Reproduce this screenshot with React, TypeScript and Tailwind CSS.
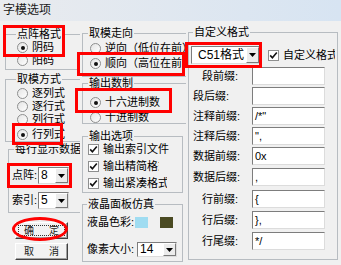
import React from 'react'

function Radio({ label, checked = false, className = '' }: { label: string; checked?: boolean; className?: string }) {
  return (
    <div className={`flex items-center h-[13px] gap-[4px] whitespace-nowrap ${className}`}>
      <span className="w-[11px] h-[11px] shrink-0 rounded-full border border-[#8e8f8f] bg-gradient-to-br from-[#e4e4e4] to-white flex items-center justify-center">
        {checked && <span className="w-[4px] h-[4px] rounded-full bg-[#111]" />}
      </span>
      <span>{label}</span>
    </div>
  )
}

function Check({ label, className = '', textClass = '' }: { label: string; className?: string; textClass?: string }) {
  return (
    <div className={`flex items-center h-[13px] gap-[4px] whitespace-nowrap ${className}`}>
      <span className="w-[11px] h-[11px] shrink-0 border border-[#8e8f8f] bg-white flex items-center justify-center">
        <svg width="9" height="9" viewBox="0 0 9 9">
          <path d="M1.2 4.4 L3.4 6.8 L7.8 1.6" fill="none" stroke="#111" strokeWidth="1.6" />
        </svg>
      </span>
      <span className={`overflow-hidden ${textClass}`}>{label}</span>
    </div>
  )
}

function Group({ title, className, legendClass, children }: { title: string; className: string; legendClass: string; children?: React.ReactNode }) {
  return (
    <fieldset className={`shrink-0 border border-[#b7bcc1] ${className}`}>
      <legend className={`px-[1px] leading-[13px] whitespace-nowrap ${legendClass}`}>{title}</legend>
      {children}
    </fieldset>
  )
}

function DropBtn() {
  return (
    <span className="w-[13px] h-full shrink-0 bg-[#ececec] border border-t-white border-l-white border-r-[#7a7a7a] border-b-[#7a7a7a] flex items-center justify-center">
      <svg width="7" height="4" viewBox="0 0 7 4">
        <path d="M0 0 H7 L3.5 4 Z" fill="#000" />
      </svg>
    </span>
  )
}

function Combo({ value, className }: { value: string; className: string }) {
  return (
    <div className={`flex shrink-0 bg-white border border-t-[#7d7d7d] border-l-[#7d7d7d] border-r-[#dcdcdc] border-b-[#dcdcdc] ${className}`}>
      <span className="flex-1 pl-[2px] flex items-center font-['Liberation_Sans',sans-serif] text-[12px]">{value}</span>
      <DropBtn />
    </div>
  )
}

function Btn({ a, b, focus = false, className }: { a: string; b: string; focus?: boolean; className: string }) {
  return (
    <div className={`shrink-0 bg-[#f2f2f2] border border-t-white border-l-white border-r-[#404040] border-b-[#404040] shadow-[inset_-1px_-1px_0_#a0a0a0] p-[2px] ${className}`}>
      <div className={`h-full flex items-center justify-between px-[5px] text-[10px] text-[#222] ${focus ? 'border border-dotted border-[#333]' : 'border border-transparent'}`}>
        <span>{a}</span>
        <span>{b}</span>
      </div>
    </div>
  )
}

const fields = [
  { label: '段前缀:', value: '', row: 'mt-[3px]', pad: 'pl-[13px]' },
  { label: '段后缀:', value: '', row: 'mt-[2px]', pad: 'pl-[4px]' },
  { label: '注释前缀:', value: '/*"', row: 'mt-[2px]', pad: 'pl-[4px]' },
  { label: '注释后缀:', value: '",', row: 'mt-[2px]', pad: 'pl-[4px]' },
  { label: '数据前缀:', value: '0x', row: 'mt-[2px]', pad: 'pl-[4px]' },
  { label: '数据后缀:', value: ',', row: 'mt-[3px]', pad: 'pl-[4px]' },
  { label: '行前缀:', value: '{', row: 'mt-[4px]', pad: 'pl-[13px]' },
  { label: '行后缀:', value: '},', row: 'mt-[3px]', pad: 'pl-[13px]' },
  { label: '行尾缀:', value: '*/', row: 'mt-[3px]', pad: 'pl-[13px]' },
]

export default function App() {
  return (
    <div className="relative w-[341px] h-[265px] overflow-hidden bg-[#f0f0f0] text-[11px] leading-[13px] text-black font-['Liberation_Sans','Noto_Sans_CJK_SC',sans-serif]">
      {/* title bar */}
      <div className="h-[21px] flex items-center pl-[3px] text-[12px] text-[#1a1a1a] bg-gradient-to-r from-[#e9ebee] to-[#d7e4f2]">
        字模选项
      </div>

      <div className="flex">
        {/* left column */}
        <div className="w-[80px] h-[244px] shrink-0 overflow-hidden flex flex-col">
          <Group title="点阵格式" className="mt-[7px] ml-[5px] w-[76px] h-[42px]" legendClass="ml-[10px]">
            <Radio label="阴码" checked className="pl-[11px]" />
            <Radio label="阳码" className="pl-[11px]" />
          </Group>
          <Group title="取模方式" className="mt-[3px] ml-[5px] w-[76px] h-[69px]" legendClass="ml-[10px]">
            <Radio label="逐列式" className="pl-[11px] mt-[1px]" />
            <Radio label="逐行式" className="pl-[11px]" />
            <Radio label="列行式" className="pl-[11px]" />
            <Radio label="行列式" checked className="pl-[11px] mt-[2px]" />
          </Group>
          <Group title="每行显示数据" className="mt-[1px] ml-[8px] w-[76px] h-[70px]" legendClass="ml-[5px]">
            <div className="flex items-center mt-[11px] pl-[3px]">
              <span className="w-[26px] shrink-0">点阵:</span>
              <Combo value="8" className="w-[31px] h-[17px]" />
            </div>
            <div className="flex items-center mt-[8px] pl-[3px]">
              <span className="w-[26px] shrink-0">索引:</span>
              <Combo value="5" className="w-[31px] h-[17px]" />
            </div>
          </Group>
          <Btn a="确" b="定" focus className="mt-[9px] ml-[15px] w-[53px] h-[17px]" />
          <Btn a="取" b="消" className="mt-[4px] ml-[15px] w-[53px] h-[17px]" />
        </div>

        {/* middle column */}
        <div className="w-[106px] h-[244px] shrink-0 overflow-hidden flex flex-col">
          <Group title="取模走向" className="mt-[6px] ml-[2px] w-[110px] h-[50px]" legendClass="ml-[5px]">
            <Radio label="逆向（低位在前）" className="pl-[7px] mt-[2px]" />
            <Radio label="顺向（高位在前）" checked className="pl-[7px] mt-[2px]" />
          </Group>
          <Group title="输出数制" className="ml-[2px] w-[110px] h-[47px]" legendClass="ml-[5px]">
            <Radio label="十六进制数" checked className="pl-[7px] mt-[6px]" />
            <Radio label="十进制数" className="pl-[7px] mt-[2px]" />
          </Group>
          <Group title="输出选项" className="mt-[6px] ml-[2px] w-[101px] h-[63px]" legendClass="ml-[5px] leading-[12px]">
            <Check label="输出索引文件" className="pl-[5px]" />
            <Check label="输出精简格式" className="pl-[5px] mt-[4px]" textClass="w-[56px]" />
            <Check label="输出紧凑格式" className="pl-[5px] mt-[4px]" textClass="w-[64px]" />
          </Group>
          <Group title="液晶面板仿真" className="mt-[5px] ml-[2px] w-[101px] h-[64px]" legendClass="ml-[4px]">
            <div className="flex items-center mt-[5px] pl-[4px]">
              <span className="w-[48px] shrink-0">液晶色彩:</span>
              <span className="w-[13px] h-[11px] bg-[#9fdcf1]" />
              <span className="w-[13px] h-[11px] ml-[12px] bg-[#4a4a22]" />
            </div>
            <div className="flex items-center mt-[13px] pl-[4px]">
              <span className="w-[50px] shrink-0">像素大小:</span>
              <Combo value="14" className="w-[40px] h-[15px]" />
            </div>
          </Group>
        </div>

        {/* right column */}
        <div className="w-[155px] h-[244px] shrink-0 overflow-hidden flex flex-col">
          <Group title="自定义格式" className="mt-[5px] ml-[2px] w-[150px] h-[234px]" legendClass="ml-[4px]">
            <div className="flex items-center mt-[7px] pl-[2px]">
              <div className="flex shrink-0 w-[69px] h-[18px] bg-white border border-t-[#7d7d7d] border-l-[#7d7d7d] border-r-[#dcdcdc] border-b-[#dcdcdc]">
                <span className="flex-1 pl-[6px] flex items-center text-[12px]">C51格式</span>
                <DropBtn />
              </div>
              <Check label="自定义格式" className="ml-[8px]" textClass="w-[52px]" />
            </div>
            {fields.map((f) => (
              <div key={f.label} className={`flex items-center h-[18px] ${f.row}`}>
                <span className={`w-[63px] shrink-0 whitespace-nowrap ${f.pad}`}>{f.label}</span>
                <span className="w-[73px] h-[18px] shrink-0 bg-white border border-t-[#7d7d7d] border-l-[#7d7d7d] border-r-[#dcdcdc] border-b-[#dcdcdc] pl-[2px] flex items-center text-[11px] font-['Liberation_Sans',sans-serif]">
                  {f.value}
                </span>
              </div>
            ))}
          </Group>
        </div>
      </div>

      {/* red annotations */}
      <div className="pointer-events-none absolute left-[3px] top-[25px] w-[62px] h-[32px] border-[3px] border-[#f00]" />
      <div className="pointer-events-none absolute left-[77px] top-[52px] w-[108px] h-[24px] border-[3px] border-[#f00]" />
      <div className="pointer-events-none absolute left-[75px] top-[88px] w-[97px] h-[25px] border-[3px] border-[#f00]" />
      <div className="pointer-events-none absolute left-[12px] top-[123px] w-[51px] h-[22px] border-[3px] border-[#f00]" />
      <div className="pointer-events-none absolute left-[7px] top-[163px] w-[65px] h-[25px] border-[3px] border-[#f00]" />
      <div className="pointer-events-none absolute left-[185px] top-[42px] w-[77px] h-[26px] border-[3px] border-[#f00]" />
      <div className="pointer-events-none absolute left-[12px] top-[217px] w-[56px] h-[24px] rounded-[50%] border-[3px] border-[#f00]" />
    </div>
  )
}
